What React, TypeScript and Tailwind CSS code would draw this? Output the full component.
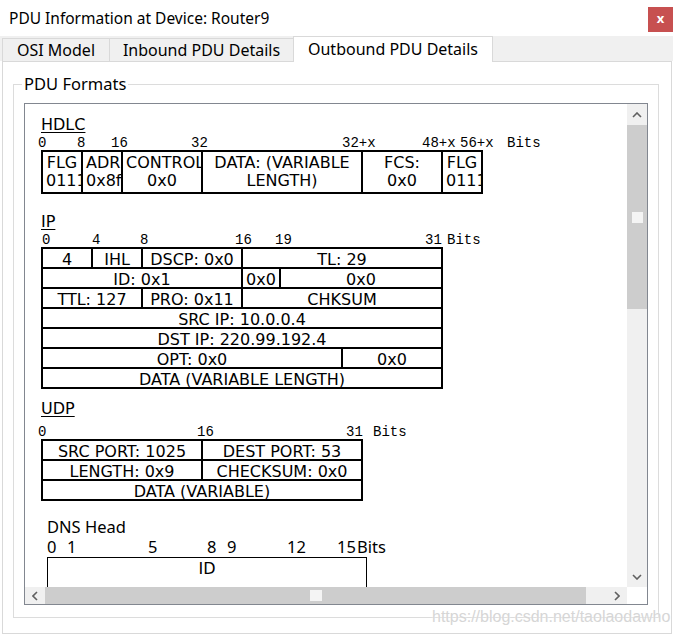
import React from "react";

const UI = "font-['Noto_Sans',sans-serif]";
const VERD = "font-['DejaVu_Sans',sans-serif] text-[16px]";
const MONO = "flex h-[14px] font-['Liberation_Mono',monospace] text-[14px] leading-[14px] whitespace-nowrap";

function Chevron({ dir }: { dir: "up" | "down" | "left" | "right" }) {
  const vertical = dir === "up" || dir === "down";
  const pts = {
    up: "1,5 5,1 9,5",
    down: "1,1 5,5 9,1",
    left: "5,1 1,5 5,9",
    right: "1,1 5,5 1,9",
  }[dir];
  return (
    <svg
      width={vertical ? 10 : 6}
      height={vertical ? 6 : 10}
      viewBox={vertical ? "0 0 10 6" : "0 0 6 10"}
    >
      <polyline points={pts} fill="none" stroke="#606060" strokeWidth="1.6" />
    </svg>
  );
}

const CELL =
  "shrink-0 border-r-2 border-b-2 border-black pt-[2px] leading-[18px] text-center whitespace-nowrap";

const hdlc: [string, string[]][] = [
  ["w-[40px]", ["FLG", "01111110"]],
  ["w-[40px]", ["ADR", "0x8f"]],
  ["w-[80px]", ["CONTROL", "0x0"]],
  ["w-[160px]", ["DATA: (VARIABLE", "LENGTH)"]],
  ["w-[80px]", ["FCS:", "0x0"]],
  ["w-[40px]", ["FLG", "01111110"]],
];

const ipRows: [string, string][][] = [
  [
    ["w-[50px]", "4"],
    ["w-[50px]", "IHL"],
    ["w-[100px]", "DSCP: 0x0"],
    ["w-[200px]", "TL: 29"],
  ],
  [
    ["w-[200px]", "ID: 0x1"],
    ["w-[38px]", "0x0"],
    ["w-[162px]", "0x0"],
  ],
  [
    ["w-[100px]", "TTL: 127"],
    ["w-[100px]", "PRO: 0x11"],
    ["w-[200px]", "CHKSUM"],
  ],
  [["w-[400px]", "SRC IP: 10.0.0.4"]],
  [["w-[400px]", "DST IP: 220.99.192.4"]],
  [
    ["w-[300px]", "OPT: 0x0"],
    ["w-[100px]", "0x0"],
  ],
  [["w-[400px]", "DATA (VARIABLE LENGTH)"]],
];

const udpRows: [string, string][][] = [
  [
    ["w-[160px]", "SRC PORT: 1025"],
    ["w-[160px]", "DEST PORT: 53"],
  ],
  [
    ["w-[160px]", "LENGTH: 0x9"],
    ["w-[160px]", "CHECKSUM: 0x0"],
  ],
  [["w-[320px]", "DATA (VARIABLE)"]],
];

function Table({ rows }: { rows: [string, string][][] }) {
  return (
    <div className={`ml-[16px] w-max border-t-2 border-l-2 border-black ${VERD}`}>
      {rows.map((r, i) => (
        <div key={i} className="flex">
          {r.map(([w, t], j) => (
            <div key={j} className={`${CELL} ${w} h-[20px]`}>
              {t}
            </div>
          ))}
        </div>
      ))}
    </div>
  );
}

function Label({ children, className }: { children: React.ReactNode; className: string }) {
  return (
    <div className={`ml-[16px] leading-[19px] underline underline-offset-[2px] ${VERD} ${className}`}>
      {children}
    </div>
  );
}

export default function App() {
  return (
    <div className="relative h-[634px] w-[677px] overflow-hidden bg-white text-black">
      {/* Title bar */}
      <div className="flex h-[36px] items-start justify-between pl-[9px] pr-[4px]">
        <span className={`${UI} mt-[7px] text-[15.5px] leading-[22px]`}>
          PDU Information at Device: Router9
        </span>
        <div className={`${UI} mt-[7px] flex h-[25px] w-[25px] items-center justify-center bg-[#c75050] pb-[2px] text-[13px] font-bold leading-none text-white`}>
          x
        </div>
      </div>

      {/* Tabs */}
      <div className={`${UI} flex h-[25px] w-[673px] items-end bg-[#f0f0f0] pl-[2px] text-[16px]`}>
        <div className="flex h-[23px] w-[108px] items-center justify-center border border-b-0 border-[#d9d9d9]">
          OSI Model
        </div>
        <div className="flex h-[23px] w-[183px] items-center justify-center border-t border-[#d9d9d9]">
          Inbound PDU Details
        </div>
        <div className="relative z-10 -mb-px flex h-[26px] w-[200px] items-center justify-center border border-b-0 border-[#d9d9d9] bg-white pb-[1px]">
          Outbound PDU Details
        </div>
      </div>

      {/* Panel */}
      <div className="ml-[2px] h-[573px] w-[670px] border border-[#d9d9d9] bg-white">
        <fieldset className="m-0 ml-[10px] mt-[11px] w-[646px] border border-[#dcdcdc] p-0 pb-[12px]">
          <legend className={`${UI} ml-[8px] px-[2px] text-[16.5px] leading-[22px]`}>PDU Formats</legend>

          <div className="ml-[10px] mt-[8px] grid h-[502px] w-[624px] grid-cols-[602px_20px] grid-rows-[483px_17px] border border-[#828790]">
            {/* Viewport */}
            <div className="overflow-hidden bg-white">
              {/* HDLC */}
              <Label className="mt-[11px] w-max">HDLC</Label>
              <div className={`${MONO} mt-[2px]`}>
                <span className="ml-[13px] w-[39px] shrink-0">0</span>
                <span className="w-[34px] shrink-0">8</span>
                <span className="w-[80px] shrink-0">16</span>
                <span className="w-[151px] shrink-0">32</span>
                <span className="w-[80px] shrink-0">32+x</span>
                <span className="w-[38px] shrink-0">48+x</span>
                <span className="w-[47px] shrink-0">56+x</span>
                <span className="shrink-0">Bits</span>
              </div>
              <div className={`ml-[16px] flex w-max border-t-2 border-l-2 border-black ${VERD}`}>
                {hdlc.map(([w, lines], i) => (
                  <div
                    key={i}
                    className={`${w} h-[42px] shrink-0 overflow-hidden border-r-2 border-b-2 border-black px-[3px] pt-[2px] text-center leading-[18px] whitespace-nowrap`}
                  >
                    {lines.map((l, k) => (
                      <div key={k}>{l}</div>
                    ))}
                  </div>
                ))}
              </div>

              {/* IP */}
              <Label className="mt-[18px] w-max">IP</Label>
              <div className={`${MONO} mt-[2px]`}>
                <span className="ml-[17px] w-[50px] shrink-0">0</span>
                <span className="w-[48px] shrink-0">4</span>
                <span className="w-[95px] shrink-0">8</span>
                <span className="w-[40px] shrink-0">16</span>
                <span className="w-[150px] shrink-0">19</span>
                <span className="w-[22px] shrink-0">31</span>
                <span className="shrink-0">Bits</span>
              </div>
              <Table rows={ipRows} />

              {/* UDP */}
              <Label className="mt-[10px] w-max">UDP</Label>
              <div className={`${MONO} mt-[7px]`}>
                <span className="ml-[13px] w-[159px] shrink-0">0</span>
                <span className="w-[149px] shrink-0">16</span>
                <span className="w-[27px] shrink-0">31</span>
                <span className="shrink-0">Bits</span>
              </div>
              <Table rows={udpRows} />

              {/* DNS */}
              <div className={`${UI} ml-[22px] mt-[16px] text-[16.5px] leading-[20px]`}>DNS Head</div>
              <div className={`${UI} flex text-[16.5px] leading-[20px] whitespace-nowrap`}>
                <span className="ml-[22px] w-[20px] shrink-0">0</span>
                <span className="w-[81px] shrink-0">1</span>
                <span className="w-[59px] shrink-0">5</span>
                <span className="w-[20px] shrink-0">8</span>
                <span className="w-[60px] shrink-0">9</span>
                <span className="w-[50px] shrink-0">12</span>
                <span className="w-[20px] shrink-0 overflow-hidden">15</span>
                <span className="shrink-0 bg-white">Bits</span>
              </div>
              <div className={`ml-[22px] h-[80px] w-[320px] border border-black pt-[2px] text-center leading-[18px] ${VERD}`}>
                ID
              </div>
            </div>

            {/* Vertical scrollbar */}
            <div className="flex flex-col bg-[#f0f0f0]">
              <div className="flex h-[21px] items-center justify-center">
                <Chevron dir="up" />
              </div>
              <div className="flex h-[184px] items-center justify-center bg-[#cdcdcd]">
                <div className="h-[11px] w-[11px] bg-[#f4f4f4]" />
              </div>
              <div className="flex-1" />
              <div className="flex h-[21px] items-center justify-center">
                <Chevron dir="down" />
              </div>
            </div>

            {/* Horizontal scrollbar */}
            <div className="flex bg-[#f0f0f0]">
              <div className="flex w-[20px] items-center justify-center">
                <Chevron dir="left" />
              </div>
              <div className="flex w-[541px] items-center justify-center bg-[#cdcdcd]">
                <div className="h-[11px] w-[12px] bg-[#f4f4f4]" />
              </div>
              <div className="w-[20px]" />
              <div className="flex w-[21px] items-center justify-center">
                <Chevron dir="right" />
              </div>
            </div>
            <div className="bg-white" />
          </div>
        </fieldset>
      </div>

      {/* Watermark */}
      <div className="absolute left-[432px] top-[607px] font-['Liberation_Sans',sans-serif] text-[16px] leading-[20px] text-[#d6d6d6] [text-shadow:0_0_2px_#ffffff]">
        https://blog.csdn.net/taolaodawho
      </div>
    </div>
  );
}
